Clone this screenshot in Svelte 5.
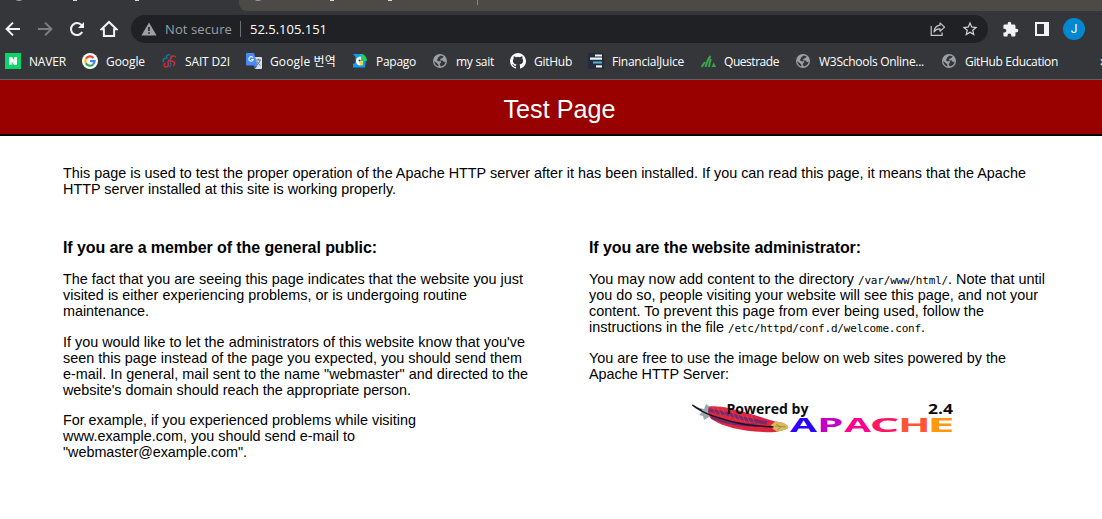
<script>
  const bookmarks = [
    { icon: 'naver', label: 'NAVER', width: 77, text: 37 },
    { icon: 'google', label: 'Google', width: 79, text: 39 },
    { icon: 'sait', label: 'SAIT D2I', width: 85, text: 45 },
    { icon: 'translate', label: 'Google 번역', width: 106, text: 66 },
    { icon: 'papago', label: 'Papago', width: 80, text: 40 },
    { icon: 'globe', label: 'my sait', width: 78, text: 38 },
    { icon: 'github', label: 'GitHub', width: 78, text: 38 },
    { icon: 'juice', label: 'FinancialJuice', width: 112, text: 72 },
    { icon: 'questrade', label: 'Questrade', width: 95, text: 55 },
    { icon: 'globe', label: 'W3Schools Online...', width: 146, text: 105 },
    { icon: 'globe', label: 'GitHub Education', width: 159, text: 93 }
  ];

  // Letters of the wordmark: position, stretched width and colour.
  const wordmark = [
    { letter: 'A', x: 99, width: 27, fill: '#2b00ff' },
    { letter: 'P', x: 125.9, width: 26.5, fill: '#c400c8' },
    { letter: 'A', x: 153.3, width: 26.7, fill: '#ff0090' },
    { letter: 'C', x: 178.6, width: 29.9, fill: '#ff1764' },
    { letter: 'H', x: 206.9, width: 32.7, fill: '#ff5535' },
    { letter: 'E', x: 236.3, width: 27.6, fill: '#ff990a' }
  ];

  // Tightens or loosens a line of text so that it fills exactly the given width.
  function fit(node, width) {
    const apply = () => {
      node.style.letterSpacing = '0px';
      const natural = node.getBoundingClientRect().width;
      node.style.letterSpacing = (width - natural) / node.textContent.length + 'px';
    };
    apply();
    document.fonts?.ready.then(apply);
  }
</script>

<div class="window">
  <div class="tabs">
    <div class="active"><i class="fav"></i><i class="bit b1"></i><i class="bit b2"></i></div>
    <div class="other"><i class="fav"></i><i class="bit b3"></i><i class="bit b4"></i></div>
    <div class="rest"></div>
  </div>

  <div class="toolbar">
    <div class="nav">
      <svg viewBox="0 0 16 16" width="16" height="16" class="line"><path d="M15 8H2M8 1.600 1.600 8 8 14.400" /></svg>
      <svg viewBox="0 0 16 16" width="16" height="16" class="line dim"><path d="M1 8h13M8 1.600 14.400 8 8 14.400" /></svg>
      <svg viewBox="0 0 16 16" width="16" height="16" class="line"><path d="M13.200 11.100A6 6 0 1 1 12.600 4.200L14 5.700" /><path d="M15 1v6H9z" class="solid" /></svg>
      <svg viewBox="0 0 18 18" width="18" height="18" class="line"><path d="M1.500 9.200 9 2l7.500 7.200h-2.400V16H3.900V9.200z" /></svg>
    </div>
    <div class="omnibox">
      <svg viewBox="0 0 16 14" width="16" height="14"><path d="M8 .6 15.600 13.400H.4z" fill="#9aa0a6" /><path d="M7.200 5h1.600v4H7.200zM7.200 10.200h1.600v1.600H7.200z" fill="#202124" /></svg>
      <span class="secure"><span use:fit={67}>Not secure</span></span>
      <i class="sep"></i>
      <span class="url"><span use:fit={77}>52.5.105.151</span></span>
      <svg class="share" viewBox="0 0 16 16" width="16" height="16" fill="none" stroke="#c4c7ca" stroke-width="1.2"><path d="M1.200 5v9.300h10.900v-2.800" /><path d="M10 2l4.600 4.100L10 10.200V7.900C7.100 7.800 5.300 8.800 4 11c.3-3.500 2.200-6.300 6-6.800z" stroke-linejoin="round" /></svg>
      <svg class="star" viewBox="0 0 24 24" width="18" height="18"><path fill="#d3d5d8" d="m22 9.240-7.190-.620L12 2 9.190 8.630 2 9.240l5.460 4.730L5.820 21 12 17.270 18.180 21l-1.630-7.030zM12 15.400l-3.760 2.270 1-4.280-3.320-2.880 4.380-.380L12 6.100l1.710 4.040 4.380.380-3.320 2.880 1 4.280z" /></svg>
    </div>
    <svg class="puzzle" viewBox="0 0 24 24" width="17" height="17"><path fill="#f1f3f4" d="M20.500 11H19V7c0-1.100-.900-2-2-2h-4V3.500a2.500 2.500 0 0 0-5 0V5H4c-1.100 0-1.990.900-1.990 2v3.800H3.500c1.490 0 2.700 1.210 2.700 2.700s-1.210 2.700-2.700 2.700H2V20c0 1.100.900 2 2 2h3.800v-1.500c0-1.490 1.210-2.700 2.700-2.700s2.700 1.210 2.700 2.700V22H17c1.100 0 2-.900 2-2v-4h1.500a2.500 2.500 0 0 0 0-5z" /></svg>
    <svg class="panel" viewBox="0 0 14 14" width="14" height="14"><path fill="#f1f3f4" fill-rule="evenodd" d="M0 0h14v14H0zM2 2v10h7V2z" /></svg>
    <span class="avatar">J</span>
  </div>

  <div class="bookmarks">
    {#each bookmarks as b}
      <div class="bookmark" style="width: {b.width}px">
        <svg viewBox="0 0 16 16" width="16" height="16">
          {#if b.icon === 'naver'}
            <path fill="#08d668" d="M0 0h16v16H0z" />
            <path fill="#fff" d="M4 4h3l2.300 3.600V4H12v8H9L6.700 8.400V12H4z" />
          {:else if b.icon === 'google'}
            <circle cx="8" cy="8" r="8" fill="#fff" />
            <g fill="none" stroke-width="2.200">
              <path stroke="#ea4335" d="M3.900 5.800A4.600 4.600 0 0 1 11.400 4.900" />
              <path stroke="#fbbc05" d="M3.900 5.800a4.700 4.700 0 0 0 0 4.500" />
              <path stroke="#34a853" d="M3.900 10.300a4.600 4.600 0 0 0 7.200 1.200" />
              <path stroke="#4285f4" d="M8 8.100h4.600a4.600 4.600 0 0 1-1.500 3.400" />
            </g>
          {:else if b.icon === 'sait'}
            <g fill="none" stroke-width="1.500">
              <path stroke="#18749f" d="M9 2C6 1 4.500 3.500 6 5.800M5.500 5.200C2.500 4.800 1 7.500 3 9.200M11 2.500 9 7.500" />
              <path stroke="#d42b35" d="M9.500 6c0-3.500 4.500-4 5-1.500M7 7.500l3.500.5c4 .5 4 4 1.500 5M6.500 8.500c2 2.500.5 5.500-1.500 5.500s-3-2.500-.500-3.800" />
              <path stroke="#17699a" d="M9 9c1.500 2 1 4-1 5" />
            </g>
          {:else if b.icon === 'translate'}
            <path fill="#dce0e5" d="M7 4h8q1 0 1 1v10q0 1-1 1H9z" />
            <path fill="#4a8af4" d="M1 0h7l3.600 12.500H1q-1 0-1-1V1q0-1 1-1z" />
            <path fill="#3367d6" d="m8 12.500 1 3.500 2.600-3.500z" />
            <path fill="none" stroke="#eef4ff" stroke-width="1.200" d="M7 4.800A2.200 2.200 0 1 0 7.200 6.500H5.300" />
            <path fill="none" stroke="#66717c" d="M10 7h5M12.500 5.800V7M14 7c-.500 2.500-2 4-3 4.800M11 8.500c.800 1.700 2 3 3.400 4" />
          {:else if b.icon === 'papago'}
            <path fill="#0d9cf2" d="M1 1h8c3 0 5 2 5 5l-1 8.500H1V11l2.500-1.500V4z" />
            <path fill="#fff" d="M9 3.500C5 3.500 4 6 4 8c0 3 2 4.500 4.500 4.500L11 8z" />
            <path fill="#20ce64" d="M8 1c4 0 7 2.700 7 7H9V4z" />
            <path fill="#ffd51e" d="M8 8.500h3v3.500l-2 .5-2-2z" />
            <circle cx="7.600" cy="7.500" r="1.100" fill="#173657" />
          {:else if b.icon === 'globe'}
            <circle cx="8" cy="8" r="7" fill="#9aa0a6" />
            <path fill="#35363a" d="M8.800 2.400 6.300 4.200 5 7.200l1 1h3v1.200L7.600 11l1.200 2.600c3-.600 4.600-2.600 4.800-5L12 9.200l-1.200-1.800H8.200V6l2.200-1 1.400-1.400a6 6 0 0 0-3-1.200zM2.300 8l4 3.600v2c-2.300-.700-4-2.800-4-5.600z" />
          {:else if b.icon === 'github'}
            <path fill="#fff" d="M8 0a8 8 0 0 0-2.530 15.590c.400.070.550-.170.550-.380v-1.490c-2.230.480-2.700-.940-2.700-.940-.360-.930-.890-1.170-.890-1.170-.730-.500.050-.490.050-.490.810.060 1.230.830 1.230.830.720 1.230 1.870.870 2.330.660.070-.520.280-.870.510-1.070-1.780-.200-3.640-.890-3.640-3.950 0-.870.310-1.590.820-2.150-.080-.200-.360-1.020.080-2.120 0 0 .670-.210 2.200.820A7.700 7.700 0 0 1 8 3.870a7.700 7.700 0 0 1 2 .270c1.530-1.040 2.200-.820 2.200-.820.440 1.100.160 1.920.080 2.120.510.560.820 1.270.820 2.150 0 3.070-1.870 3.750-3.650 3.950.290.250.540.730.540 1.480v2.190c0 .210.150.460.550.380A8 8 0 0 0 8 0z" />
          {:else if b.icon === 'juice'}
            <path fill="#222c3c" d="M0 0h16v16H0z" />
            <path fill="#f1f4f5" d="M7 1.500h7v2H7zM2 4.500h12v2.200H2z" />
            <path fill="#4cb9d1" d="M5 8.500h9v2H5z" /><path fill="#edf4f5" d="M8 12.300h6v2.200H8z" />
          {:else}
            <path fill="none" stroke="#36a849" stroke-width="2" d="M1.500 14 5 9M5.500 14C7 10 7 7 10.500 3M9 14c.500-3 .5-5.500 2-8" />
            <path fill="#36a849" d="M11.500 14h4.500l-2.300-4.500z" />
          {/if}
        </svg>
        <span class="label"><span use:fit={b.text}>{b.label}</span></span>
      </div>
    {/each}
    <span class="more">»</span>
  </div>

  <header><h1><span use:fit={112}>Test Page</span></h1></header>

  <main>
    <p>
      <span use:fit={963}>This page is used to test the proper operation of the Apache HTTP server after it has been installed. If you can read this page, it means that the Apache</span><br />
      <span use:fit={333}>HTTP server installed at this site is working properly.</span>
    </p>
    <div class="columns">
      <section>
        <h2><span use:fit={314}>If you are a member of the general public:</span></h2>
        <p>
          <span use:fit={460}>The fact that you are seeing this page indicates that the website you just</span><br />
          <span use:fit={404}>visited is either experiencing problems, or is undergoing routine</span><br />
          <span use:fit={86}>maintenance.</span>
        </p>
        <p>
          <span use:fit={462}>If you would like to let the administrators of this website know that you've</span><br />
          <span use:fit={459}>seen this page instead of the page you expected, you should send them</span><br />
          <span use:fit={465}>e-mail. In general, mail sent to the name "webmaster" and directed to the</span><br />
          <span use:fit={348}>website's domain should reach the appropriate person.</span>
        </p>
        <p>
          <span use:fit={353}>For example, if you experienced problems while visiting</span><br />
          <span use:fit={292}>www.example.com, you should send e-mail to</span><br />
          <span use:fit={184}>"webmaster@example.com".</span>
        </p>
      </section>
      <section>
        <h2><span use:fit={272}>If you are the website administrator:</span></h2>
        <p>
          <span use:fit={269}>You may now add content to the directory&nbsp;</span><code use:fit={90}>/var/www/html/</code><span use:fit={97}>. Note that until</span><br />
          <span use:fit={449}>you do so, people visiting your website will see this page, and not your</span><br />
          <span use:fit={395}>content. To prevent this page from ever being used, follow the</span><br />
          <span use:fit={139}>instructions in the file&nbsp;</span><code use:fit={193}>/etc/httpd/conf.d/welcome.conf</code>.
        </p>
        <p>
          <span use:fit={417}>You are free to use the image below on web sites powered by the</span><br />
          <span use:fit={140}>Apache HTTP Server:</span>
        </p>
        <svg class="powered" viewBox="0 0 270 40" width="270" height="40">
          <defs>
            <linearGradient id="feather" x1="0" x2="1">
              <stop offset="0" stop-color="#dd2940" /><stop offset=".8" stop-color="#d92540" /><stop offset=".9" stop-color="#d9503e" />
            </linearGradient>
            <clipPath id="vane"><path d="M18 6.500C26 5 45 9 60 14L84 21.500C92 22 98 25 97 28 92 31 84 33 72 32 50 31 33 27 22 20 16 17 17 10 18 6.500z" /></clipPath>
          </defs>
          <path fill="#9ba8b0" d="m15 4-2 5-4-1 2 4-3 3 4 1 1 4 5-3V6z" />
          <g clip-path="url(#vane)">
            <path fill="url(#feather)" d="M12 2h90v33H12z" />
            <path fill="none" stroke="#57277f" stroke-width="3.500" d="M17 10c14 3 22 4 33 8l26 5M20 17c14 6 30 8 46 8" opacity=".7" />
            <path fill="none" stroke="#f05545" stroke-width=".7" opacity=".7" d="m20 5 5 9m0-9 5 10m0-9 5 10m0-9 5 11m0-9 5 11m0-10 5 12m0-10 5 12m0-10 5 11m0-10 5 11m-50-5-8 9m13-7-7 10m13-8-8 10m14-7-8 9m14-7-8 9m14-7-7 9m14-7-7 9" />
            <path fill="#d9b95a" d="m80 25 5-4h14v10l-12 1-5-3z" />
            <path fill="none" stroke="#8d7434" stroke-width=".6" d="m84 26 11 1M85 24l4 3M86 30l4-3" />
          </g>
          <path fill="none" stroke="#17121c" stroke-width="1.500" d="M1.500 5c10 9 29 14 45 18 13 3 23 3 36 4" />
          <path fill="#15151a" d="m.5 4 10 5.500 1 2.500z" />
          <text x="35.500" y="13.500" font-size="15" textLength="82" lengthAdjust="spacingAndGlyphs" class="caption">Powered by</text>
          <text x="237" y="13.500" font-size="15" textLength="25" lengthAdjust="spacingAndGlyphs" class="caption">2.4</text>
          <text y="31.500" class="brand">{#each wordmark as w}<tspan x={w.x} textLength={w.width} lengthAdjust="spacingAndGlyphs" fill={w.fill}>{w.letter}</tspan>{/each}</text>
        </svg>
      </section>
    </div>
  </main>
</div>

<style>
  :global(body) { margin: 0; background: #fff; overflow: hidden; }
  .window { width: 1102px; height: 519px; overflow: hidden; background: #fff; color: #000; font-family: "Liberation Sans", Arial, sans-serif; }
  svg { display: block; flex: none; }

  .tabs { display: flex; height: 11px; background: #4b4a47; }
  .tabs > div { position: relative; height: 11px; box-sizing: border-box; }
  .active { width: 239px; background: #35363a; }
  .other { width: 239px; background: #4b4a47; border-bottom-left-radius: 8px; box-shadow: -8px 0 0 #35363a; }
  .other::after { content: ""; position: absolute; right: 0; top: 0; width: 1px; height: 5px; background: #85847f; }
  .rest { flex: 1; }
  .fav { position: absolute; left: 15px; top: -6px; width: 8px; height: 7px; border-radius: 50%; background: #9aa0a6; }
  .bit { position: absolute; top: 0; width: 4px; height: 1px; background: #e8d6ae; }
  .b1 { left: 73px; } .b2 { left: 135px; } .b3 { left: 91px; } .b4 { left: 149px; }

  .toolbar { display: flex; align-items: center; height: 36px; background: #35363a; }
  .nav { display: flex; align-items: center; gap: 16px; width: 126px; padding-left: 5px; box-sizing: border-box; }
  .nav svg:last-child { margin-left: -1px; }
  .line { fill: none; stroke: #f1f3f4; stroke-width: 2; }
  .line.dim { stroke: #7d7e81; }
  .line .solid { fill: #f1f3f4; stroke: none; }
  .omnibox { display: flex; align-items: center; width: 857px; height: 28px; margin-left: 5px; padding: 0 9px 0 10px; box-sizing: border-box; border-radius: 14px; background: #202124; font: 13px/28px "Open Sans", sans-serif; white-space: nowrap; }
  .secure { width: 75px; margin-left: 8px; color: #9aa0a6; }
  .sep { width: 1px; height: 16px; margin-right: 9px; background: #6b6e72; }
  .url { color: #fff; }
  .share { margin-left: auto; margin-right: 15px; }
  .puzzle { margin-left: 14px; }
  .panel { margin-left: 16px; }
  .avatar { width: 22px; height: 22px; margin-left: 14px; border-radius: 50%; background: #0288d1; color: #fff; text-align: center; font: 12px/22px Roboto, sans-serif; }

  .bookmarks { display: flex; align-items: center; height: 33px; padding: 0 0 4px 5px; box-sizing: border-box; background: #35363a; border-bottom: 1px solid #5f6063; overflow: hidden; }
  .bookmark { display: flex; align-items: center; flex: none; gap: 8px; }
  .label { padding-top: 1px; font: 12px/20px "Open Sans", "Noto Sans CJK KR", sans-serif; color: #fff; white-space: nowrap; }
  .more { color: #fff; flex: none; font: 14px/20px "Open Sans", sans-serif; }

  header { height: 56px; box-sizing: border-box; padding-left: 17px; background: #900; border-bottom: 2px solid #000; text-align: center; color: #fff; }
  h1 { margin: 0; padding-top: 14px; font-size: 25.200px; line-height: 30px; font-weight: 400; }
  main { padding: 29px 63px 0; font-size: 14.400px; line-height: 16px; white-space: nowrap; }
  p { margin: 0 0 14.400px; }
  .columns { display: grid; grid-template-columns: 526px 1fr; margin-top: 42px; }
  h2 { margin: 0 0 14.400px; font-size: 16px; line-height: 18px; font-weight: 700; }
  code { font-family: "DejaVu Sans Mono", monospace; font-size: 11px; line-height: 0; }
  .powered { margin: 18px 0 0 102px; }
  .caption { font-family: "Open Sans", sans-serif; font-weight: 700; fill: #0c0c0c; }
  .brand { font-family: "Open Sans", sans-serif; font-size: 19px; font-weight: 700; }
</style>
